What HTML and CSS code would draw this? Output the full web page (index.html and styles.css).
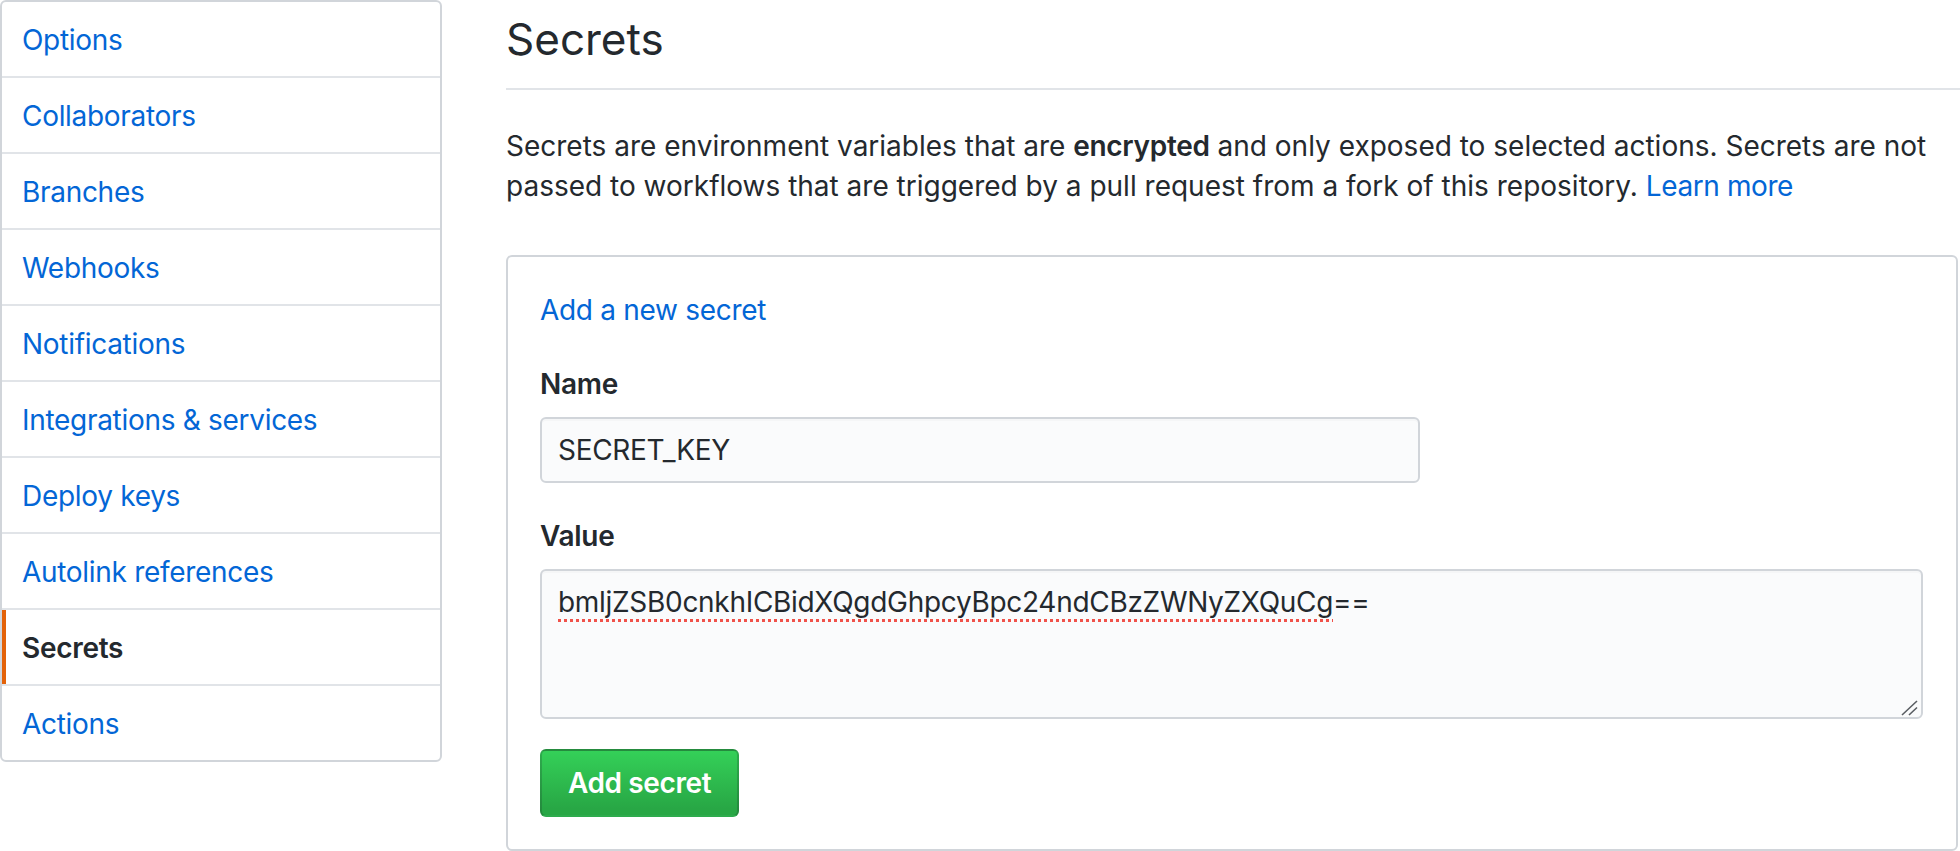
FILE: index.html
```html
<!DOCTYPE html>
<html lang="en">
<head>
<meta charset="utf-8">
<title>Secrets</title>
<link rel="stylesheet" href="styles.css">
</head>
<body>
<div class="page">
  <nav class="menu">
    <a class="menu-item" href="#">Options</a>
    <a class="menu-item" href="#">Collaborators</a>
    <a class="menu-item" href="#">Branches</a>
    <a class="menu-item" href="#">Webhooks</a>
    <a class="menu-item" href="#">Notifications</a>
    <a class="menu-item" href="#">Integrations &amp; services</a>
    <a class="menu-item" href="#">Deploy keys</a>
    <a class="menu-item" href="#">Autolink references</a>
    <a class="menu-item selected" href="#">Secrets</a>
    <a class="menu-item" href="#">Actions</a>
  </nav>
  <main class="main">
    <div class="subhead">
      <h2 class="subhead-heading">Secrets</h2>
    </div>
    <p class="intro">Secrets are environment variables that are <strong>encrypted</strong> and only exposed to selected actions. Secrets are not passed to workflows that are triggered by a pull request from a fork of this repository. <a href="#">Learn more</a></p>
    <form class="box">
      <a class="box-title" href="#">Add a new secret</a>
      <div class="form-group">
        <label class="label">Name</label>
        <input class="form-control name-input" type="text" value="SECRET_KEY">
      </div>
      <div class="form-group value-group">
        <label class="label">Value</label>
        <div class="form-control textarea" role="textbox"><span class="misspelled">bmljZSB0cnkhICBidXQgdGhpcyBpc24ndCBzZWNyZXQuCg</span>==<svg class="grip" width="18" height="16" viewBox="0 0 18 16"><path d="M1 15 L16 1 M8 15 L16 7.5" stroke="#5a5e63" stroke-width="1.6" fill="none"/></svg></div>
      </div>
      <button class="btn-primary" type="button">Add secret</button>
    </form>
  </main>
</div>
</body>
</html>
```
FILE: styles.css
```css
html, body {
  margin: 0;
  padding: 0;
  background: #fff;
}
body {
  font-family: Inter, "Noto Sans", "Liberation Sans", sans-serif;
  font-size: 28px;
  color: #24292e;
}
a {
  color: #0366d6;
  text-decoration: none;
}
.page {
  display: flex;
  align-items: flex-start;
  width: 1960px;
}
.menu {
  width: 442px;
  box-sizing: border-box;
  border: 2px solid #d1d5da;
  border-radius: 6px;
  display: flex;
  flex-direction: column;
  flex-shrink: 0;
}
.menu-item {
  position: relative;
  display: block;
  padding: 17px 20px 15px;
  line-height: 42px;
  letter-spacing: -0.3px;
  border-bottom: 2px solid #e1e4e8;
}
.menu-item:last-child {
  border-bottom: none;
}
.menu-item.selected {
  color: #24292e;
  font-weight: 600;
}
.menu-item.selected::before {
  content: "";
  position: absolute;
  left: 0;
  top: 0;
  bottom: 0;
  width: 4px;
  background: #e36209;
}
.main {
  flex: 1;
  margin-left: 64px;
  min-width: 0;
}
.subhead {
  border-bottom: 2px solid #e1e4e8;
  padding: 12px 0 21px;
}
.subhead-heading {
  margin: 0;
  font-size: 44px;
  font-weight: 400;
  line-height: 55px;
}
.intro {
  margin: 36px 0 49px;
  line-height: 40px;
}
.intro strong {
  font-weight: 600;
  letter-spacing: -0.3px;
}
.intro a {
  letter-spacing: -0.4px;
}
.box {
  display: flex;
  flex-direction: column;
  align-items: flex-start;
  margin-right: 2px;
  border: 2px solid #d1d5da;
  border-radius: 6px;
  padding: 32px 33px 32px 32px;
  letter-spacing: -0.3px;
}
.box-title {
  line-height: 42px;
  margin-bottom: 32px;
}
.form-group {
  display: flex;
  flex-direction: column;
  align-items: flex-start;
  width: 100%;
  margin-bottom: 32px;
}
.value-group {
  margin-bottom: 30px;
}
.label {
  font-weight: 600;
  line-height: 42px;
  margin-bottom: 12px;
}
.form-control {
  box-sizing: border-box;
  font-family: inherit;
  font-size: 28px;
  letter-spacing: -0.3px;
  color: #24292e;
  background: #fafbfc;
  border: 2px solid #d1d5da;
  border-radius: 6px;
  box-shadow: inset 0 2px 0 rgba(225, 228, 232, 0.2);
  outline: none;
}
.name-input {
  width: 880px;
  height: 66px;
  padding: 0 16px;
  line-height: 40px;
}
.textarea {
  position: relative;
  width: 100%;
  height: 150px;
  padding: 11px 16px;
  line-height: 40px;
}
.misspelled {
  text-decoration: underline dotted #f0524a;
  text-decoration-thickness: 3px;
  text-underline-offset: 7px;
}
.grip {
  position: absolute;
  right: 2px;
  bottom: 1px;
}
.btn-primary {
  font-family: inherit;
  font-size: 28px;
  font-weight: 600;
  letter-spacing: -0.4px;
  line-height: 40px;
  color: #fff;
  height: 68px;
  padding: 12px 26px;
  border: 2px solid rgba(27, 31, 35, 0.2);
  border-radius: 6px;
  background: linear-gradient(#34d058, #28a745 90%);
  cursor: pointer;
}
```
